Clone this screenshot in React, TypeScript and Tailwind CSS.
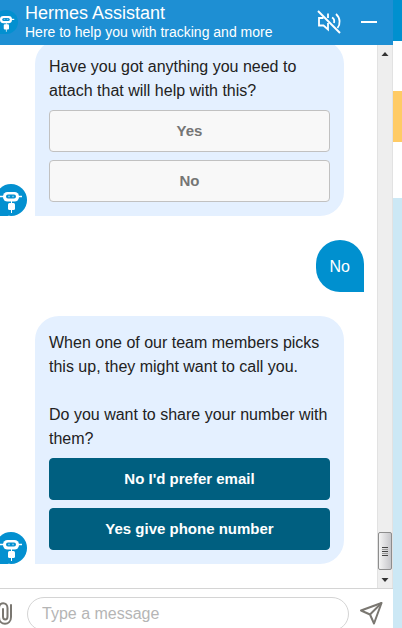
import React from 'react';
import type { ReactNode } from 'react';

function BotAvatar({ className }: { className: string }) {
  return (
    <svg viewBox="0 0 32 32" className={className} aria-hidden="true">
      <circle cx="16" cy="16" r="16" fill="#0390d0" />
      <path d="M1 22 L1 32 L14 32 Z" fill="#0390d0" />
      <path d="M3 12.5 H27" stroke="#fff" strokeWidth="1.5" />
      <rect x="8" y="8" width="16" height="9.5" rx="4.5" fill="#fff" />
      <rect x="11" y="10.5" width="10" height="4" rx="2" fill="#0390d0" />
      <path d="M13 12.5 H15 M17 12.5 H19" stroke="#6fbfe6" strokeWidth="1.5" />
      <path d="M16.5 17 V29" stroke="#fff" strokeWidth="1" />
      <rect x="13" y="19" width="7" height="7" rx="1.5" fill="#fff" />
    </svg>
  );
}

function MutedIcon() {
  return (
    <svg
      width="24"
      height="24"
      viewBox="0 0 24 24"
      fill="none"
      stroke="currentColor"
      strokeWidth="1.8"
      aria-hidden="true"
    >
      <path d="M6.5 8 H2 V15.5 H6.5 L11 19.5 V13" />
      <path d="M11 3.5 V8" />
      <path d="M15 7.5 C17 8.5 17.5 11 17 13" />
      <path d="M19 4 C23.5 8 23.5 14.5 20.5 18" />
      <path d="M1 1 L23 23" strokeWidth="2" />
    </svg>
  );
}

interface BotMessageProps {
  children: ReactNode;
  options: string[];
  used?: boolean;
}

function BotMessage({ children, options, used = false }: BotMessageProps) {
  return (
    <div className="flex shrink-0 items-end gap-2">
      <BotAvatar className="size-8 shrink-0" />
      <div className="mr-[33px] flex-1 rounded-3xl rounded-bl-none bg-[#e4f0ff] px-3.5 pt-[15px] pb-3.5 text-[#222]">
        {children}
        <div className="mt-[7px] flex flex-col gap-2">
          {options.map((option) => (
            <button
              key={option}
              type="button"
              disabled={used}
              className={[
                'h-[42px] rounded border text-[15px] font-bold',
                used
                  ? 'border-[#c1c1c1] bg-[#f8f8f8] text-[#757575]'
                  : 'border-[#005f80] bg-[#005f80] text-white',
              ].join(' ')}
            >
              {option}
            </button>
          ))}
        </div>
      </div>
    </div>
  );
}

function Scrollbar() {
  return (
    <div
      className="flex w-4 shrink-0 flex-col items-center justify-between border-x border-[#e2e2e2] bg-[#eee]"
      aria-hidden="true"
    >
      <svg width="14" height="17" viewBox="0 0 14 17">
        <path d="M3.5 11 L7 7 L10.5 11 Z" fill="#333" />
      </svg>
      <div className="flex w-full flex-col items-center">
        <div className="flex h-[38px] w-full flex-col items-center justify-center gap-px rounded-xs border border-[#8d8d8d] bg-linear-to-r from-[#f4f4f4] to-[#c6c6ca]">
          <div className="h-px w-1.5 bg-[#444]" />
          <div className="h-px w-1.5 bg-[#999]" />
          <div className="h-px w-1.5 bg-[#444]" />
          <div className="h-px w-1.5 bg-[#999]" />
          <div className="h-px w-1.5 bg-[#444]" />
        </div>
        <svg width="14" height="18" viewBox="0 0 14 18">
          <path d="M3.5 8 L7 12 L10.5 8 Z" fill="#333" />
        </svg>
      </div>
    </div>
  );
}

function Header() {
  return (
    <header className="flex h-[45px] shrink-0 items-center bg-[#1e8fd3] pb-0.5 text-white">
      <BotAvatar className="-ml-px size-6 shrink-0" />
      <div className="ml-[7px] flex-1">
        <h1 className="text-lg leading-5">Hermes Assistant</h1>
        <p className="text-sm leading-[18px]">Here to help you with tracking and more</p>
      </div>
      <button type="button" aria-label="Turn sound on" className="mr-5">
        <MutedIcon />
      </button>
      <button type="button" aria-label="Minimise chat" className="flex h-6 w-4 items-center">
        <span className="h-0.5 w-full bg-white" />
      </button>
      <div className="w-4" />
    </header>
  );
}

function Composer() {
  return (
    <form className="flex h-10 shrink-0 overflow-hidden border-t border-[#d4d4d4] bg-white pt-2">
      <button type="button" aria-label="Attach a file" className="h-8 w-8 shrink-0">
        <svg
          width="18"
          height="24"
          viewBox="0 0 18 24"
          fill="none"
          stroke="#7a7771"
          strokeWidth="2"
          strokeLinecap="round"
          aria-hidden="true"
        >
          <path d="M16 4 V16 C16 25 4 25 4 16 V7 C4 0.5 12.5 0.5 12.5 7 V15.5 C12.5 19.5 8 19.5 8 15.5 V8" />
        </svg>
      </button>
      <input
        type="text"
        aria-label="Message"
        placeholder="Type a message"
        className="h-[34px] min-w-0 flex-1 rounded-full border border-[#d4d4d4] px-3.5 text-base text-[#222] outline-none placeholder:text-[#b5b5b5]"
      />
      <button type="submit" aria-label="Send" className="mr-2.5 ml-[11px] h-8 shrink-0">
        <svg
          width="23"
          height="23"
          viewBox="0 0 23 23"
          fill="none"
          stroke="#7a7771"
          strokeWidth="2"
          strokeLinejoin="round"
          aria-hidden="true"
        >
          <path d="M21.5 1 L1 8.5 L10 12.5 L14 21.5 Z" />
          <path d="M21.5 1 L10 12.5" />
        </svg>
      </button>
    </form>
  );
}

export default function App() {
  return (
    <div className="flex h-screen overflow-hidden bg-white font-['Liberation_Sans',Arial,sans-serif]">
      {/* The chat window runs slightly past the left edge */}
      <main className="-ml-[5px] flex min-w-0 flex-1 flex-col">
        <Header />
        <div className="flex min-h-0 flex-1">
          <section
            aria-label="Conversation"
            className="flex min-w-0 flex-1 flex-col justify-end gap-6 overflow-hidden pb-6 leading-6"
          >
            <BotMessage options={['Yes', 'No']} used>
              <p>Have you got anything you need to attach that will help with this?</p>
            </BotMessage>
            <p className="mr-[13px] shrink-0 self-end rounded-3xl rounded-br-none bg-[#0090cf] px-3.5 pt-[15px] pb-[13px] text-white">
              No
            </p>
            <BotMessage options={["No I'd prefer email", 'Yes give phone number']}>
              <p>When one of our team members picks this up, they might want to call you.</p>
              <p className="mt-6">Do you want to share your number with them?</p>
            </BotMessage>
          </section>
          <Scrollbar />
        </div>
        <Composer />
      </main>

      {/* Edge of the page behind the chat */}
      <div className="flex w-[9px] shrink-0 flex-col" aria-hidden="true">
        <div className="h-[41px] bg-[#0090cf]" />
        <div className="mt-[50px] h-[51px] bg-[#ffcb65]" />
        <div className="mt-14 flex-1 bg-[#cce8f5]" />
      </div>
    </div>
  );
}
